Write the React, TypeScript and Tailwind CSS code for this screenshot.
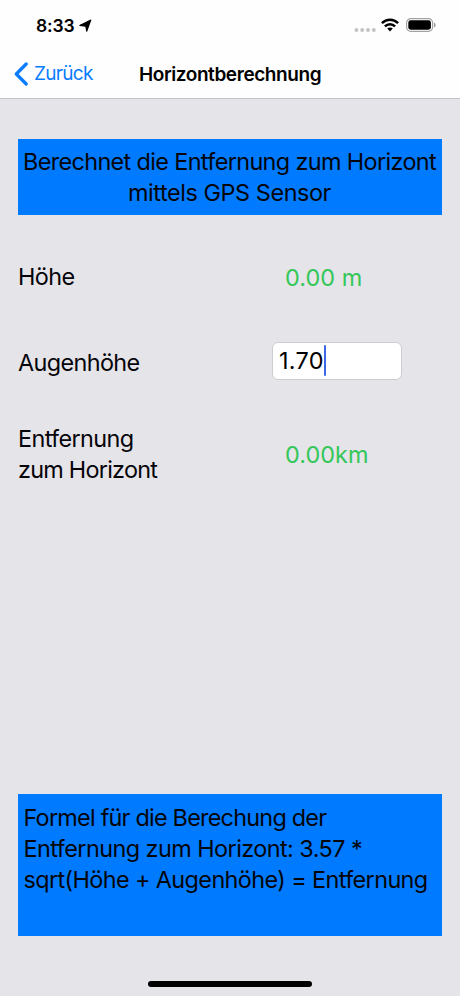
import React from "react";

function StatusBar() {
  return (
    <div className="flex h-[50px] items-start justify-between pl-9 pr-[24px]">
      <div className="flex items-center pt-[14px]">
        <span className="w-[39px] whitespace-nowrap text-[17.5px] font-semibold leading-[24px] tracking-[-0.1px]">8:33</span>
        <svg width="14" height="14" viewBox="0 0 14 14" className="ml-[4px]">
          <path d="M11.8 1 L7.7 12.2 L6.8 7.2 L0.8 6.4 Z" fill="#000" stroke="#000" strokeWidth="1.1" strokeLinejoin="round" />
        </svg>
      </div>
      <div className="flex h-[50px] items-center">
        <svg width="22" height="6" viewBox="0 0 22 6" className="mr-[5px] mt-[10px]">
          <g fill="#c4c4c6">
            <circle cx="2.4" cy="3" r="2" />
            <circle cx="8.2" cy="3" r="2" />
            <circle cx="14" cy="3" r="2" />
            <circle cx="19.8" cy="3" r="2" />
          </g>
        </svg>
        <svg width="18" height="14" viewBox="0 0 18 14" className="mr-[7px]">
          <g fill="none" stroke="#000" strokeWidth="2.5">
            <path d="M0.9 5.1 C5.4 0.5 12.6 0.5 17.1 5.1" />
            <path d="M3.9 8.3 C6.8 5.4 11.2 5.4 14.1 8.3" />
          </g>
          <path d="M9 13.4 L6.2 10.6 C7.7 9.2 10.3 9.2 11.8 10.6 Z" fill="#000" />
        </svg>
        <svg width="30" height="14" viewBox="0 0 30 14">
          <rect x="0.6" y="0.6" width="26" height="12.8" rx="4.2" fill="#fff" stroke="#a3a3a5" strokeWidth="1.2" />
          <rect x="2.3" y="2.3" width="22.6" height="9.4" rx="2.4" fill="#000" />
          <path d="M28 4.6 C30.1 5.4 30.1 8.6 28 9.4 Z" fill="#98989a" />
        </svg>
      </div>
    </div>
  );
}

function NavigationBar() {
  return (
    <div className="grid h-12 grid-cols-[139px_1fr_139px] items-center">
      <button className="flex items-center pl-[14px] text-[#0a7cff]">
        <svg width="15" height="24" viewBox="0 0 15 24">
          <path d="M12.2 2 L2.3 12 L12.2 22" fill="none" stroke="currentColor" strokeWidth="3.2" strokeLinecap="round" strokeLinejoin="round" />
        </svg>
        <span className="ml-[5px] whitespace-nowrap text-[19px] leading-6 tracking-[-0.7px]">Zurück</span>
      </button>
      <h1 className="whitespace-nowrap pt-px text-[19px] font-semibold leading-6 tracking-[-0.42px]">Horizontberechnung</h1>
    </div>
  );
}

export default function App() {
  return (
    <div className="flex h-[996px] w-[460px] flex-col overflow-hidden bg-[#e5e4e9] font-['Inter',sans-serif] text-[23.4px] leading-[31px] tracking-[-0.62px] text-[#05050a]">
      <header className="h-[99px] shrink-0 border-b border-[#c4c4c8] bg-[#fefefe] text-black">
        <StatusBar />
        <NavigationBar />
      </header>
      <main className="flex grow flex-col px-[18px] pt-10">
        <section className="h-[75.5px] whitespace-nowrap bg-[#007aff] pr-px pt-[7px] text-center">
          <p className="tracking-[-0.63px]">Berechnet die Entfernung zum Horizont</p>
          <p className="tracking-[-0.42px]">mittels GPS Sensor</p>
        </section>
        <div className="mt-[46.5px] flex h-[31px] items-start">
          <span className="w-[267px]">Höhe</span>
          <span className="pt-px tracking-[0.05px] text-[#34c759]">0.00 m</span>
        </div>
        <div className="mt-[50px] flex h-[38px] items-center">
          <span className="w-[254px] pt-[3px]">Augenhöhe</span>
          <div className="flex h-[38px] w-[130px] items-start rounded-[6px] border border-[#cdcdd1] bg-white pl-[6px] pt-px">
            <span className="w-[45px] whitespace-nowrap pt-px tracking-[0.3px] text-black">1.70</span>
            <span className="mt-px h-[31px] w-[2px] rounded-full bg-[#3e67e8]" />
          </div>
        </div>
        <div className="mt-[43px] flex h-[62px] items-center">
          <p className="w-[267px]">Entfernung<br /><span className="tracking-[-0.75px]">zum Horizont</span></p>
          <span className="tracking-[0.05px] text-[#34c759]">0.00km</span>
        </div>
        <section className="mt-[309px] h-[142px] whitespace-nowrap bg-[#007aff] pl-[5.5px] pt-[8px]">
          <p className="tracking-[-0.76px]">Formel für die Berechung der</p>
          <p className="tracking-[-0.55px]">Entfernung zum Horizont: 3.57 *</p>
          <p className="tracking-[-0.6px]">sqrt(Höhe + Augenhöhe) = Entfernung</p>
        </section>
        <div className="mt-[45px] h-[6px] w-[164px] self-center rounded-full bg-black" />
      </main>
    </div>
  );
}
